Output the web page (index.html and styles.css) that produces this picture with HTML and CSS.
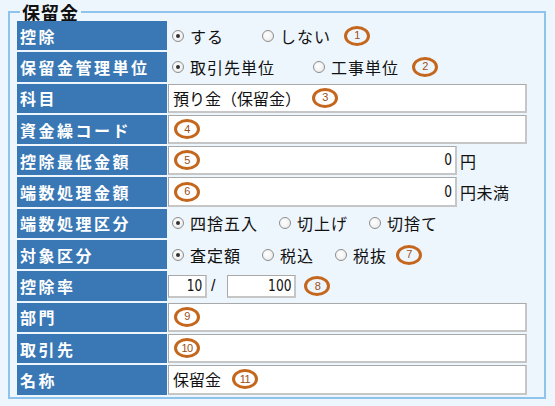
FILE: index.html
```html
<!DOCTYPE html>
<html lang="ja">
<head>
<meta charset="utf-8">
<link rel="stylesheet" href="styles.css">
</head>
<body>
<div class="panel">
  <div class="legend">保留金</div>
  <div class="grid">
    <div class="lbl">控除</div>
    <div class="val opts wide">
      <span class="opt"><span class="radio on"></span>する</span>
      <span class="opt last"><span class="radio"></span>しない</span>
      <span class="badge">1</span>
    </div>

    <div class="lbl">保留金管理単位</div>
    <div class="val opts wide">
      <span class="opt"><span class="radio on"></span>取引先単位</span>
      <span class="opt last"><span class="radio"></span>工事単位</span>
      <span class="badge">2</span>
    </div>

    <div class="lbl">科目</div>
    <div class="val"><div class="box full"><span class="txt">預り金（保留金）</span><span class="badge">3</span></div></div>

    <div class="lbl">資金繰コード</div>
    <div class="val"><div class="box full"><span class="badge first">4</span></div></div>

    <div class="lbl">控除最低金額</div>
    <div class="val"><div class="box amt"><span class="badge first">5</span><span class="num">0</span></div><span class="unit">円</span></div>

    <div class="lbl">端数処理金額</div>
    <div class="val"><div class="box amt"><span class="badge first">6</span><span class="num">0</span></div><span class="unit">円未満</span></div>

    <div class="lbl">端数処理区分</div>
    <div class="val opts narrow">
      <span class="opt"><span class="radio on"></span>四捨五入</span>
      <span class="opt"><span class="radio"></span>切上げ</span>
      <span class="opt last"><span class="radio"></span>切捨て</span>
    </div>

    <div class="lbl">対象区分</div>
    <div class="val opts narrow">
      <span class="opt"><span class="radio on"></span>査定額</span>
      <span class="opt"><span class="radio"></span>税込</span>
      <span class="opt last"><span class="radio"></span>税抜</span>
      <span class="badge">7</span>
    </div>

    <div class="lbl">控除率</div>
    <div class="val">
      <div class="box small r1"><span class="num">10</span></div>
      <span class="slash">/</span>
      <div class="box small r2"><span class="num">100</span></div>
      <span class="badge after">8</span>
    </div>

    <div class="lbl">部門</div>
    <div class="val"><div class="box full"><span class="badge first">9</span></div></div>

    <div class="lbl">取引先</div>
    <div class="val"><div class="box full"><span class="badge first">10</span></div></div>

    <div class="lbl">名称</div>
    <div class="val"><div class="box full"><span class="txt">保留金</span><span class="badge">11</span></div></div>
  </div>
</div>
</body>
</html>
```

FILE: styles.css
```css
html, body {
  margin: 0;
  padding: 0;
}

body {
  background: #eef6fd;
  font-family: "Noto Sans CJK JP", "Noto Sans", sans-serif;
  color: #111;
  width: 555px;
  height: 406px;
  overflow: hidden;
}

.panel {
  margin: 11px 0 0 8px;
  width: 538px;
  box-sizing: border-box;
  border: 2px solid #8ec3ec;
  padding: 8px 17px 2px 7px;
}

.legend {
  display: table;
  margin: -18px 0 0 3px;
  padding: 0 2px;
  background: #eef6fd;
  font-size: 18px;
  line-height: 18px;
  font-weight: bold;
  letter-spacing: 1px;
  color: #111;
}

.grid {
  display: grid;
  grid-template-columns: 150px 359px;
  grid-auto-rows: 29.3px;
  column-gap: 1px;
  row-gap: 2px;
}

.lbl {
  background: #3a78b5;
  color: #fff;
  font-weight: bold;
  font-size: 16px;
  letter-spacing: 2.5px;
  display: flex;
  align-items: center;
  padding-left: 3px;
  line-height: 1;
  white-space: nowrap;
}

.val {
  display: flex;
  align-items: center;
  font-size: 16px;
  line-height: 1;
  white-space: nowrap;
}

.opts {
  padding-left: 4px;
  letter-spacing: 1px;
}

.opt {
  display: flex;
  align-items: center;
}

.wide .opt {
  margin-right: 38px;
}

.narrow .opt {
  margin-right: 21px;
}

.wide .opt.last {
  margin-right: 13px;
}

.narrow .opt.last {
  margin-right: 9px;
}

.radio {
  width: 12px;
  height: 12px;
  box-sizing: border-box;
  border: 1px solid #8d8d8d;
  border-radius: 50%;
  background: radial-gradient(circle at 40% 40%, #ffffff 0%, #f1f1f1 60%, #dcdcdc 100%);
  margin-right: 6px;
  display: flex;
  align-items: center;
  justify-content: center;
  flex: none;
}

.radio.on::after {
  content: "";
  width: 4px;
  height: 4px;
  border-radius: 50%;
  background: #333;
}

.box {
  box-sizing: border-box;
  background: #fff;
  border-style: solid;
  border-width: 1px 2px 2px 1px;
  border-color: #a9a9a9 #c6c6c6 #c6c6c6 #a9a9a9;
  display: flex;
  align-items: center;
  height: 100%;
  padding: 0 3px 0 4px;
}

.box.full {
  width: 359px;
}

.box.amt {
  width: 289px;
}

.box.small {
  height: 23px;
  padding-right: 3px;
}

.box.r1 {
  width: 39px;
}

.box.r2 {
  width: 69px;
}

.txt {
  margin-right: 11px;
}

.num {
  margin-left: auto;
  font-family: "Liberation Sans Narrow", "DejaVu Sans Condensed", "Liberation Sans", sans-serif;
  font-size: 16px;
  transform: scaleX(0.85);
  transform-origin: right center;
}

.unit {
  margin-left: 3px;
  letter-spacing: 0.5px;
}

.slash {
  margin: 0 12px 0 4px;
  font-family: "Liberation Sans", sans-serif;
  font-size: 16px;
}

.badge {
  box-sizing: border-box;
  width: 26px;
  height: 20px;
  border: 3px solid #c4661c;
  border-radius: 50%;
  display: flex;
  align-items: center;
  justify-content: center;
  font-family: "Liberation Sans", sans-serif;
  font-size: 11px;
  letter-spacing: -0.5px;
  color: #9a4e16;
  flex: none;
  line-height: 1;
}

.badge.after {
  margin-left: 8px;
}

.box .badge.first {
  margin-left: 1px;
}
```
